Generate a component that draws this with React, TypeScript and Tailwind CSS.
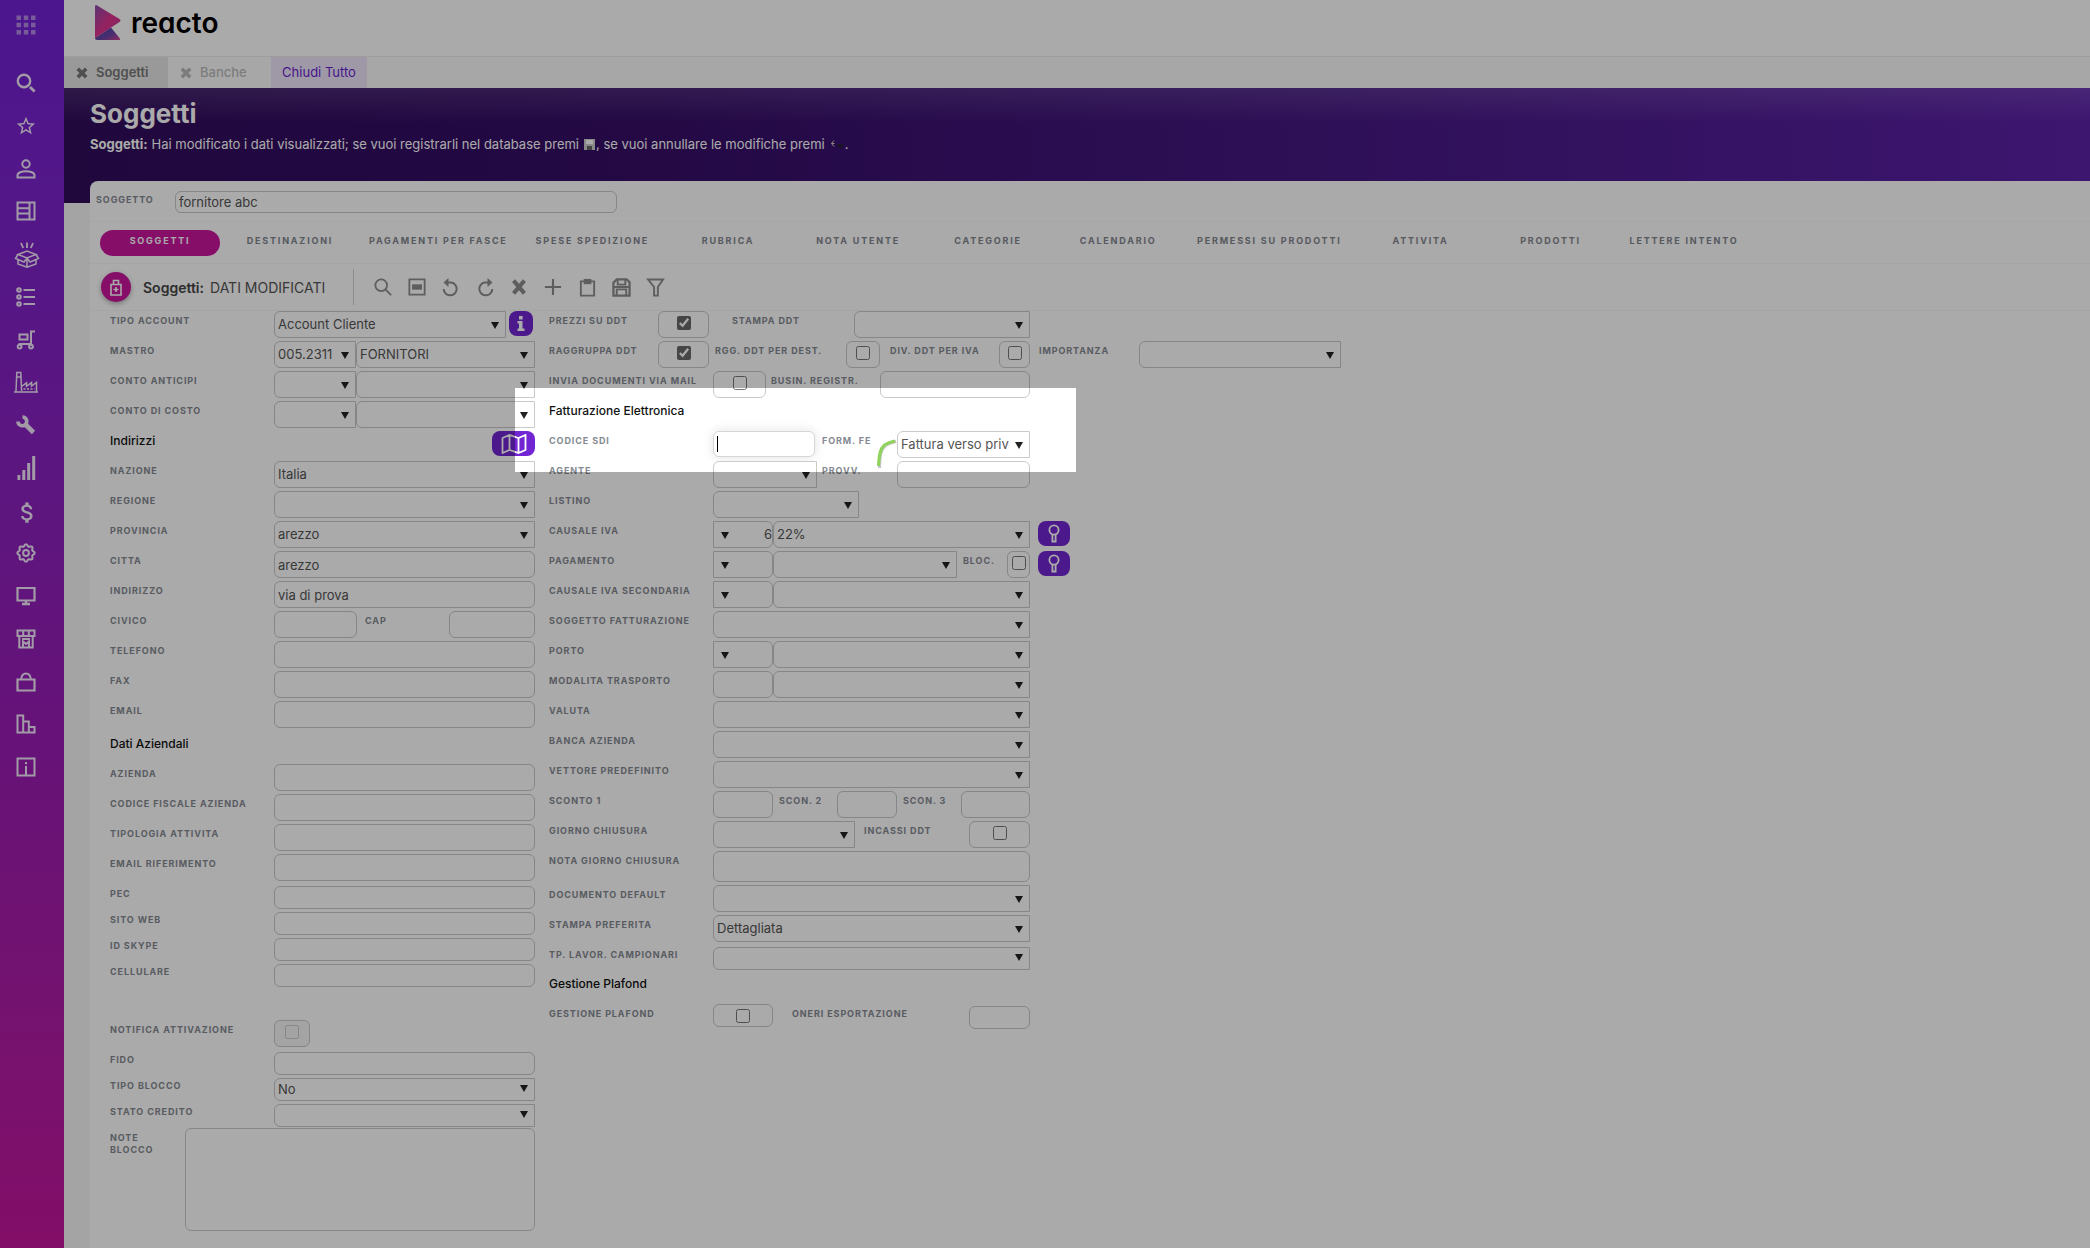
import { useId, type ReactNode } from "react";
import { MdAttachMoney, MdStarBorder } from "react-icons/md";

const LABEL = "shrink-0 text-[9px] leading-3 font-bold tracking-widest uppercase text-[#858a92]";
const FIELD = "w-full h-full border border-[#cacaca] bg-white px-[3px] text-[13px] text-[#555] outline-none";

function Svg({ size = 20, children }: { size?: number; children: ReactNode }) {
  return (
    <svg
      width={size}
      height={size}
      viewBox="0 0 20 20"
      fill="none"
      stroke="currentColor"
      strokeWidth="2"
      aria-hidden="true"
    >
      {children}
    </svg>
  );
}

// Contorno dell'ingranaggio a otto denti
const GEAR = Array.from({ length: 64 }, (_, i) => {
  const a = (i / 64) * Math.PI * 2;
  const r = 7.7 + 0.95 * Math.cos(8 * a);
  return `${(10 + r * Math.sin(a)).toFixed(2)},${(10 - r * Math.cos(a)).toFixed(2)}`;
}).join(" ");

const MENU: { name: string; icon: ReactNode }[] = [
  {
    name: "Cerca",
    icon: (
      <Svg>
        <circle cx="8" cy="8" r="6.2" strokeWidth="2.4" />
        <path d="M14 14l4.6 4.6" strokeWidth="2.8" />
      </Svg>
    ),
  },
  { name: "Preferiti", icon: <MdStarBorder size={22} /> },
  {
    name: "Utente",
    icon: (
      <Svg>
        <circle cx="10" cy="5" r="3.7" />
        <path d="M1.5 18.5v-2.2c0-2.6 4.4-4.1 8.5-4.1s8.5 1.5 8.5 4.1v2.2z" />
      </Svg>
    ),
  },
  {
    name: "Documenti",
    icon: (
      <Svg>
        <path d="M1.5 1.5h17v17h-17zM13.5 2v16M2 7.2h11M2 12.6h11" />
      </Svg>
    ),
  },
  {
    name: "Magazzino",
    icon: (
      <svg width="26" height="26" viewBox="0 0 26 26" fill="none" stroke="currentColor" strokeWidth="1.5" aria-hidden="true">
        <path d="M7 1l2.2 5M13 .5v5.5M19 1l-2.2 5" strokeWidth="1.8" />
        <path d="M4 12.5l9-3.5 9 3.5-9 3.5zM4 12.5L1.5 16.5l8.5 3.5 3-4 3 4 8.500-3.500L22 12.5M4 18v4l9 3.2 9-3.2v-4M13 16v9" />
      </svg>
    ),
  },
  {
    name: "Liste",
    icon: (
      <Svg>
        <circle cx="3" cy="3" r="1.8" />
        <circle cx="3" cy="10" r="1.8" />
        <circle cx="3" cy="17" r="1.8" />
        <path d="M7.5 3h11.5M7.5 10h11.5M7.5 17h11.5" />
      </Svg>
    ),
  },
  {
    name: "Logistica",
    icon: (
      <Svg>
        <path d="M3.5 4.5h8v5h-8zM19 1.5h-4v12.5h-12.5" />
        <circle cx="3.6" cy="16.6" r="1.9" />
        <circle cx="15" cy="16.6" r="1.9" />
      </Svg>
    ),
  },
  {
    name: "Produzione",
    icon: (
      <svg width="24" height="22" viewBox="0 0 24 22" fill="none" stroke="currentColor" strokeWidth="1.5" aria-hidden="true">
        <path d="M0 21h24M2 20.5L2.8 1.5h4L7.6 20M7.5 15.5l5-3.7v3.5l5-3.7v3.5l5-3.7v9" />
        <path d="M3 6h4" />
        <path d="M9.5 18h11" strokeDasharray="2 1.5" />
      </svg>
    ),
  },
  {
    name: "Manutenzione",
    icon: (
      <Svg>
        <path d="M9 9l8.500 8.500" strokeWidth="4.600" />
        <path d="M2 6.500a4.300 4.300 0 0 0 7.400 2.900A4.300 4.300 0 0 0 6.500 2" strokeWidth="3.600" />
      </Svg>
    ),
  },
  {
    name: "Statistiche",
    icon: (
      <svg width="20" height="24" viewBox="0 0 20 24" fill="currentColor" aria-hidden="true">
        <path d="M1.5 19h2.8v5H1.5zM6.3 14h3v10h-3zM11.2 7h3v17h-3zM16.2 0h3v24h-3z" />
      </svg>
    ),
  },
  { name: "Contabilita", icon: <MdAttachMoney size={27} /> },
  {
    name: "Impostazioni",
    icon: (
      <Svg>
        <polygon points={GEAR} />
        <circle cx="10" cy="10" r="2.9" />
      </Svg>
    ),
  },
  {
    name: "Monitor",
    icon: (
      <Svg>
        <path d="M1.5 2h17v12.5h-17z" strokeWidth="2.2" />
        <path d="M10 14.5v3M6 18h8" strokeWidth="2.4" />
      </Svg>
    ),
  },
  {
    name: "Negozio",
    icon: (
      <Svg>
        <path d="M1.5 1.5h17v5.5h-17zM3.3 7v11.5h13.4V7M7.2 2v5M12.8 2v5" />
        <path d="M7 18v-5.5l3 2.5 3-2.5V18M6 10h8" />
      </Svg>
    ),
  },
  {
    name: "Acquisti",
    icon: (
      <Svg>
        <path d="M1.5 7.5h17v11h-17z" strokeWidth="2.2" />
        <path d="M5 7.5C5.5 3.5 7 1.5 10 1.5s4.5 2 5 6" />
      </Svg>
    ),
  },
  {
    name: "Report",
    icon: (
      <Svg>
        <path d="M1.5 1.5h5.7v17H1.5zM7.2 7.5h5.6v11H7.2zM12.8 13h5.7v5.5h-5.7z" />
      </Svg>
    ),
  },
  {
    name: "Informazioni",
    icon: (
      <Svg>
        <path d="M1.5 1.5h17v17h-17zM10 9v8.5" />
        <path d="M10 5v2.2" />
      </Svg>
    ),
  },
];

const TOOLS: { name: string; icon: ReactNode }[] = [
  {
    name: "Cerca",
    icon: (
      <Svg size={18}>
        <circle cx="8" cy="8" r="6.5" />
        <path d="M13 13l6 6" />
      </Svg>
    ),
  },
  {
    name: "Elenco",
    icon: (
      <Svg size={18}>
        <path d="M1.5 1.5h17v17h-17z" />
        <path d="M4.5 7h11v6h-11z" fill="currentColor" stroke="none" />
      </Svg>
    ),
  },
  {
    name: "Annulla",
    icon: (
      <Svg size={20}>
        <path d="M6 5.5h4.5a6.5 6.5 0 1 1-7.8 6.5" />
        <path d="M7.5 1v9L2.5 5.5z" fill="currentColor" stroke="none" />
      </Svg>
    ),
  },
  {
    name: "Ripeti",
    icon: (
      <Svg size={20}>
        <path d="M14 5.5H9.5a6.5 6.5 0 1 0 7.8 6.5" />
        <path d="M12.5 1v9l5-4.5z" fill="currentColor" stroke="none" />
      </Svg>
    ),
  },
  {
    name: "Elimina",
    icon: (
      <Svg size={18}>
        <path d="M4 3l12 14M16 3L4 17" strokeWidth="4.6" />
      </Svg>
    ),
  },
  {
    name: "Nuovo",
    icon: (
      <Svg size={18}>
        <path d="M10 1v18M1 10h18" strokeWidth="2.4" />
      </Svg>
    ),
  },
  {
    name: "Incolla",
    icon: (
      <Svg size={19}>
        <path d="M3 3.5h14v15H3z" />
        <path d="M6 1h8v5.5H6z" fill="currentColor" stroke="none" />
      </Svg>
    ),
  },
  {
    name: "Salva",
    icon: (
      <Svg size={19}>
        <path d="M5 1.5h10.5l3 3v14h-17V5z" strokeWidth="2.4" />
        <path d="M6 2v5h8V2M5 18v-6h10v6M2 9.5h16" />
      </Svg>
    ),
  },
  {
    name: "Filtra",
    icon: (
      <Svg size={19}>
        <path d="M2 1.500h16l-5.500 8v9h-4v-9z" />
      </Svg>
    ),
  },
];

const TABS = [
  "Soggetti",
  "Destinazioni",
  "Pagamenti per fasce",
  "Spese spedizione",
  "Rubrica",
  "Nota utente",
  "Categorie",
  "Calendario",
  "Permessi su prodotti",
  "Attivita",
  "Prodotti",
  "Lettere intento",
];

function Close() {
  return (
    <svg width="12" height="12" viewBox="0 0 20 20" stroke="currentColor" strokeWidth="6" aria-hidden="true">
      <path d="M3 3l14 14M17 3L3 17" />
    </svg>
  );
}

interface FieldProps {
  label?: string;
  hint?: string;
  labelWidth?: string;
  width: string;
  value?: string;
  height?: string;
}

function Label({ id, text, width = "w-[164px]" }: { id: string; text: string; width?: string }) {
  return (
    <label htmlFor={id} className={`${LABEL} ${width} pt-1 whitespace-nowrap`}>
      {text}
    </label>
  );
}

function Text({ label, hint, labelWidth, width, value = "", height = "h-[27px]" }: FieldProps) {
  const id = useId();
  return (
    <>
      {label && <Label id={id} text={label} width={labelWidth} />}
      <div className={`${width} ${height}`}>
        <input id={id} type="text" aria-label={hint} defaultValue={value} className={`${FIELD} rounded-md`} />
      </div>
    </>
  );
}

function Select({
  label,
  hint,
  labelWidth,
  width,
  value = "",
  height = "h-[27px]",
  arrow = "right",
}: FieldProps & { arrow?: "left" | "right" }) {
  const id = useId();
  const left = arrow === "left";
  return (
    <>
      {label && <Label id={id} text={label} width={labelWidth} />}
      <div className={`relative ${width} ${height}`}>
        <select
          id={id}
          aria-label={hint}
          defaultValue={value}
          className={`${FIELD} appearance-none ${left ? "rounded-r-md pr-0 pl-5 [text-align-last:right]" : "rounded-l-md pr-5"}`}
        >
          <option>{value}</option>
        </select>
        <svg
          className={`pointer-events-none absolute top-1/2 -mt-[3px] ${left ? "left-2" : "right-[7px]"}`}
          width="8"
          height="7"
          viewBox="0 0 8 7"
          fill="#222"
          aria-hidden="true"
        >
          <path d="M0 0h8L4 7z" />
        </svg>
      </div>
    </>
  );
}

function Check({
  label,
  labelWidth,
  width,
  checked = false,
  disabled = false,
  height = "h-[27px]",
}: FieldProps & { checked?: boolean; disabled?: boolean }) {
  const id = useId();
  return (
    <>
      {label && <Label id={id} text={label} width={labelWidth} />}
      <div
        className={`flex justify-center rounded-md border border-[#cacaca] pt-1 ${width} ${height} ${disabled ? "bg-[#f6f6f6]" : "bg-white"}`}
      >
        <input
          id={id}
          type="checkbox"
          defaultChecked={checked}
          disabled={disabled}
          className="h-[14px] w-[14px] accent-[#6a6a6a]"
        />
      </div>
    </>
  );
}

function Row({ children }: { children: ReactNode }) {
  return <div className="flex items-start">{children}</div>;
}

function Heading({ children }: { children: ReactNode }) {
  return <h3 className="h-[27px] text-[12px] leading-5 font-medium text-[#111]">{children}</h3>;
}

function KeyButton({ name }: { name: string }) {
  return (
    <button
      type="button"
      aria-label={name}
      className="ml-2 grid h-[25px] w-8 place-items-center rounded-lg bg-[#7226d3] text-white"
    >
      <svg width="12" height="19" viewBox="0 0 12 19" fill="none" stroke="currentColor" strokeWidth="1.8" aria-hidden="true">
        <circle cx="6" cy="6" r="4.6" />
        <path d="M4.400 10.500V17.500h3.200V10.500" />
      </svg>
    </button>
  );
}

function Sidebar() {
  return (
    <aside className="w-16 shrink-0 bg-linear-to-b from-[#7221d6] via-[#9a1bb4] via-60% to-[#c4149c] pl-[14px] text-[#f4e9fb]">
      <button type="button" aria-label="Menu" className="mt-[15px] mb-9 grid h-5 w-6 place-items-center text-[#b48ae6]">
        <svg width="20" height="20" viewBox="0 0 20 20" fill="currentColor" aria-hidden="true">
          <path d="M.5 .5h4.5v4.5H.5zM7.8 .5h4.5v4.5H7.8zM15 .5h4.5v4.5H15zM.5 7.8h4.5v4.5H.5zM7.8 7.8h4.5v4.5H7.8zM15 7.8h4.5v4.5H15zM.5 15h4.5v4.5H.5zM7.8 15h4.5v4.5H7.8zM15 15h4.5v4.5H15z" />
        </svg>
      </button>
      <nav className="flex h-[708px] flex-col justify-between" aria-label="Menu principale">
        {MENU.map((m) => (
          <a key={m.name} href="#" aria-label={m.name} className="grid h-6 w-6 place-items-center">
            {m.icon}
          </a>
        ))}
      </nav>
    </aside>
  );
}

function LeftColumn() {
  const w = "w-[261px]";
  const low = "h-[23px]";
  return (
    <div className="flex w-[425px] flex-col gap-[3px]">
      <Row>
        <Select label="Tipo account" width="w-[232px]" value="Account Cliente" />
        <button
          type="button"
          aria-label="Info account"
          className="ml-[3px] grid h-[25px] w-6 place-items-center rounded-lg bg-[#7226d3] text-white"
        >
          <svg width="8" height="15" viewBox="0 0 8 15" fill="currentColor" aria-hidden="true">
            <path d="M2 0h3.6v3.4H2zM.5 5h5v7.5H7.5V15H.5v-2.5H2v-5H.5z" />
          </svg>
        </button>
      </Row>
      <Row>
        <Select label="Mastro" width="w-[82px]" value="005.2311" />
        <Select hint="Descrizione mastro" width="w-[179px]" value="FORNITORI" />
      </Row>
      <Row>
        <Select label="Conto anticipi" width="w-[82px]" />
        <Select hint="Descrizione conto anticipi" width="w-[179px]" />
      </Row>
      <Row>
        <Select label="Conto di costo" width="w-[82px]" />
        <Select hint="Descrizione conto di costo" width="w-[179px]" />
      </Row>
      <div className="flex h-[27px] items-start justify-between">
        <Heading>Indirizzi</Heading>
        <button
          type="button"
          aria-label="Mappa"
          className="grid h-[25px] w-[43px] place-items-center rounded-lg bg-[#7226d3] text-white"
        >
          <svg width="26" height="20" viewBox="0 0 26 20" fill="none" stroke="currentColor" strokeWidth="1.8" aria-hidden="true">
            <path d="M1.5 4l7-3 9 3 7-3v15l-7 3-9-3-7 3zM8.500 1v15M17.500 4v15" />
          </svg>
        </button>
      </div>
      <Row><Select label="Nazione" width={w} value="Italia" /></Row>
      <Row><Select label="Regione" width={w} /></Row>
      <Row><Select label="Provincia" width={w} value="arezzo" /></Row>
      <Row><Text label="Citta" width={w} value="arezzo" /></Row>
      <Row><Text label="Indirizzo" width={w} value="via di prova" /></Row>
      <Row>
        <Text label="Civico" width="w-[83px]" />
        <Text label="Cap" labelWidth="ml-2 w-[84px]" width="w-[86px]" />
      </Row>
      <Row><Text label="Telefono" width={w} /></Row>
      <Row><Text label="Fax" width={w} /></Row>
      <Row><Text label="Email" width={w} /></Row>
      <div className="pt-[3px]">
        <Heading>Dati Aziendali</Heading>
      </div>
      <Row><Text label="Azienda" width={w} /></Row>
      <Row><Text label="Codice fiscale azienda" width={w} /></Row>
      <Row><Text label="Tipologia attivita" width={w} /></Row>
      <Row><Text label="Email riferimento" width={w} /></Row>
      <Row><Text label="Pec" width={w} height={low} /></Row>
      <Row><Text label="Sito web" width={w} height={low} /></Row>
      <Row><Text label="Id skype" width={w} height={low} /></Row>
      <Row><Text label="Cellulare" width={w} height={low} /></Row>
      <div className="pt-8">
        <Row><Check label="Notifica attivazione" width="w-9" disabled /></Row>
      </div>
      <Row><Text label="Fido" width={w} height={low} /></Row>
      <Row><Select label="Tipo blocco" width={w} height={low} value="No" /></Row>
      <Row><Select label="Stato credito" width={w} height={low} /></Row>
      <Row>
        <label htmlFor="note-blocco" className={`${LABEL} w-[75px] pt-1 pr-5`}>
          Note blocco
        </label>
        <textarea id="note-blocco" className="h-[103px] flex-1 resize-none rounded-md border border-[#cacaca] bg-white" />
      </Row>
    </div>
  );
}

function RightColumn() {
  const w = "w-[317px]";
  const code = "w-[60px]";
  const desc = "w-[257px]";
  return (
    <div className="flex flex-col gap-[3px]">
      <Row>
        <Check label="Prezzi su ddt" labelWidth="w-[109px]" width="w-[51px]" checked />
        <Select label="Stampa ddt" labelWidth="ml-[23px] w-[122px]" width="w-[176px]" />
      </Row>
      <Row>
        <Check label="Raggruppa ddt" labelWidth="w-[109px]" width="w-[51px]" checked />
        <Check label="Rgg. ddt per dest." labelWidth="ml-[6px] w-[131px]" width="w-[34px]" />
        <Check label="Div. ddt per iva" labelWidth="ml-[10px] w-[109px]" width="w-[31px]" />
        <Select label="Importanza" labelWidth="ml-[9px] w-[100px]" width="w-[202px]" />
      </Row>
      <Row>
        <Check label="Invia documenti via mail" width="w-[53px]" />
        <Text label="Busin. registr." labelWidth="ml-[5px] w-[109px]" width="w-[150px]" />
      </Row>
      <Heading>Fatturazione Elettronica</Heading>
      <Row>
        <Label id="codice-sdi" text="Codice sdi" />
        <div className="flex h-[26px] w-[102px] items-center rounded-md border border-[#d6d6d6] bg-white pl-[3px] shadow-[0_0_12px_rgba(0,0,0,0.12)]">
          <span className="h-4 w-px bg-black" />
          <input id="codice-sdi" type="text" className="h-full w-full min-w-0 text-[13px] outline-none" />
        </div>
        <Select label="Form. fe" labelWidth="ml-[7px] w-[75px]" width="w-[133px]" value="Fattura verso privati" />
      </Row>
      <Row>
        <Select label="Agente" width="w-[104px]" />
        <Text label="Provv." labelWidth="ml-[5px] w-[75px]" width="w-[133px]" />
      </Row>
      <Row><Select label="Listino" width="w-[146px]" /></Row>
      <Row>
        <Select label="Causale iva" width={code} value="6" arrow="left" />
        <Select hint="Descrizione causale iva" width={desc} value="22%" />
        <KeyButton name="Apri causale iva" />
      </Row>
      <Row>
        <Select label="Pagamento" width={code} arrow="left" />
        <Select hint="Descrizione pagamento" width="w-[184px]" />
        <Check label="Bloc." labelWidth="ml-[6px] w-11" width="w-[23px]" />
        <KeyButton name="Apri pagamento" />
      </Row>
      <Row>
        <Select label="Causale iva secondaria" width={code} arrow="left" />
        <Select hint="Descrizione causale iva secondaria" width={desc} />
      </Row>
      <Row><Select label="Soggetto fatturazione" width={w} /></Row>
      <Row>
        <Select label="Porto" width={code} arrow="left" />
        <Select hint="Descrizione porto" width={desc} />
      </Row>
      <Row>
        <Text label="Modalita trasporto" width={code} />
        <Select hint="Descrizione trasporto" width={desc} />
      </Row>
      <Row><Select label="Valuta" width={w} /></Row>
      <Row><Select label="Banca azienda" width={w} /></Row>
      <Row><Select label="Vettore predefinito" width={w} /></Row>
      <Row>
        <Text label="Sconto 1" width={code} />
        <Text label="Scon. 2" labelWidth="ml-[6px] w-[58px]" width={code} />
        <Text label="Scon. 3" labelWidth="ml-[6px] w-[58px]" width="w-[69px]" />
      </Row>
      <Row>
        <Select label="Giorno chiusura" width="w-[142px]" />
        <Check label="Incassi ddt" labelWidth="ml-[9px] w-[105px]" width="w-[61px]" />
      </Row>
      <Row><Text label="Nota giorno chiusura" width={w} height="h-[31px]" /></Row>
      <Row><Select label="Documento default" width={w} /></Row>
      <Row><Select label="Stampa preferita" width={w} value="Dettagliata" /></Row>
      <Row><Select label="Tp. lavor. campionari" width={w} height="h-[23px]" /></Row>
      <div className="pt-[3px]">
        <Heading>Gestione Plafond</Heading>
      </div>
      <Row>
        <Check label="Gestione plafond" width={code} height="h-[23px]" />
        <Text label="Oneri esportazione" labelWidth="ml-[19px] w-[177px]" width="w-[61px]" height="h-[23px]" />
      </Row>
    </div>
  );
}

export default function App() {
  return (
    <div className="relative flex min-h-screen overflow-hidden bg-[#f7f7f7] font-['Inter',sans-serif]">
      <Sidebar />
      <main className="flex min-w-0 flex-1 flex-col">
        <header className="flex h-14 items-start bg-white pl-[30px]">
          <a href="#" className="mt-[5px] flex items-start text-black">
            <svg width="27" height="36" viewBox="0 0 27 36" aria-hidden="true">
              <defs>
                <linearGradient id="logo-a" x1="0" y1="0" x2="1" y2="1">
                  <stop offset="0" stopColor="#8a4fb0" />
                  <stop offset=".5" stopColor="#e0338f" />
                  <stop offset="1" stopColor="#c43a97" />
                </linearGradient>
                <linearGradient id="logo-b" x1="0" y1="0" x2="1" y2="1">
                  <stop offset="0" stopColor="#4f3fa8" />
                  <stop offset=".6" stopColor="#6a46a8" />
                  <stop offset="1" stopColor="#d8408f" />
                </linearGradient>
              </defs>
              <path d="M1 33L17 22.5L25.5 33q1.5 2-1 2H3q-2 0-2-2z" fill="url(#logo-b)" />
              <path d="M1 2q0-3 2.5-1.3L25.5 14q2 1.5 0 3L1 33z" fill="url(#logo-a)" />
            </svg>
            <span className="ml-[10px] text-[28px] leading-9 font-semibold [font-feature-settings:'cv11']">reacto</span>
          </a>
        </header>

        <div className="flex h-8 border-t border-[#ececec] bg-[#fbfbfb] text-[13px]">
          <button type="button" className="flex w-[104px] items-center gap-2 bg-[#e6e6e6] pl-3 font-semibold text-[#777]">
            <Close />
            Soggetti
          </button>
          <button type="button" className="flex w-[103px] items-center gap-2 pl-3 font-medium text-[#bbb]">
            <Close />
            Banche
          </button>
          <button type="button" className="w-24 bg-[#eee4fb] text-[#6a1fd0]">
            Chiudi Tutto
          </button>
        </div>

        <section className="h-[115px] bg-[linear-gradient(180deg,rgba(255,255,255,0.11),transparent_30%),linear-gradient(90deg,#310c5c,#360e68_30%,#451883_62%,#5c21a8)] pt-2 pl-[26px] text-white">
          <h1 className="text-[26px] leading-9 font-bold">Soggetti</h1>
          <p className="flex items-center text-[13px] leading-6">
            <strong className="mr-1">Soggetti:</strong>
            Hai modificato i dati visualizzati; se vuoi registrarli nel database premi
            <svg className="mr-px ml-[5px]" width="11" height="11" viewBox="0 0 11 11" aria-hidden="true">
              <path d="M0 0h11v11H0z" fill="#ccc" />
              <path d="M2 1h7v4H2z" fill="#fff" />
              <path d="M3 7h5v4H3z" fill="#666" />
            </svg>
            , se vuoi annullare le modifiche premi
            <svg className="mr-px ml-[5px]" width="14" height="10" viewBox="0 0 14 10" aria-hidden="true">
              <path d="M4 1.500L1.500 4.500l2.500 3M1.500 4.500h3" fill="none" stroke="#d8d0c4" />
              <path d="M6 5h7v4H9z" fill="#2a1a3c" />
            </svg>
            .
          </p>
        </section>

        <section className="-mt-[22px] ml-[26px] flex-1 rounded-tl-lg bg-white">
          <div className="flex h-[41px] items-center border-b border-[#fafafa] pb-[3px] pl-[6px]">
            <label htmlFor="soggetto" className={`${LABEL} w-[79px]`}>
              Soggetto
            </label>
            <div className="h-[22px] w-[442px]">
              <input id="soggetto" type="text" defaultValue="fornitore abc" className={`${FIELD} rounded-md`} />
            </div>
          </div>

          <div className="flex h-[42px] items-center gap-[10px] border-b border-[#f8f8f8] pl-[10px]" role="tablist">
            {TABS.map((tab, i) => (
              <button
                key={tab}
                type="button"
                role="tab"
                aria-selected={i === 0}
                className={`h-[26px] min-w-[120px] shrink-0 rounded-full px-[9px] pb-1 text-[9px] leading-3 font-bold tracking-[0.2em] uppercase ${
                  i === 0 ? "bg-[#c9159c] text-white" : "text-[#82868e]"
                }`}
              >
                {tab}
              </button>
            ))}
          </div>

          <div className="flex h-[47px] items-center border-b border-[#f8f8f8] pl-[11px] text-[14px] text-[#555]">
            <span className="grid h-[30px] w-[30px] place-items-center rounded-full bg-[#c9159c] text-white shadow-[0_2px_5px_rgba(0,0,0,0.3)]">
              <svg width="12" height="17" viewBox="0 0 12 17" fill="none" stroke="currentColor" strokeWidth="1.6" aria-hidden="true">
                <path d="M1 5.5h10v10.5H1zM3.5 5V1.5h5V5M6 8v5M3.5 10.5h5" />
              </svg>
            </span>
            <h2 className="ml-3">
              <strong className="mr-[6px] font-semibold text-[#444]">Soggetti:</strong>
              DATI MODIFICATI
            </h2>
            <div className="ml-7 flex h-9 items-center gap-[14px] border-l border-[#d4d4d4] pl-[19px] text-[#8e8e8e]">
              {TOOLS.map((t) => (
                <button key={t.name} type="button" aria-label={t.name} className="grid h-5 w-5 place-items-center">
                  {t.icon}
                </button>
              ))}
            </div>
          </div>

          <form className="flex items-start gap-[14px] pl-5">
            <LeftColumn />
            <RightColumn />
          </form>
        </section>
      </main>

      {/* Evidenziazione del riquadro Fatturazione Elettronica */}
      <div className="pointer-events-none absolute top-[388px] left-[515px] h-[84px] w-[561px] shadow-[0_0_0_3000px_rgba(0,0,0,0.333)]">
        <svg className="absolute top-[50px] left-[358px]" width="26" height="34" viewBox="0 0 26 34" fill="none" aria-hidden="true">
          <path d="M6.5 30C7 19 7 12 12 8c3-2.5 7-3.5 11-4.5" stroke="#c4c4c4" strokeWidth="3" />
          <path d="M5.5 28C6 17 7 11 11 7.5c3-2.5 7-3.5 11-4.5" stroke="#90d35c" strokeWidth="3" />
        </svg>
      </div>
    </div>
  );
}
